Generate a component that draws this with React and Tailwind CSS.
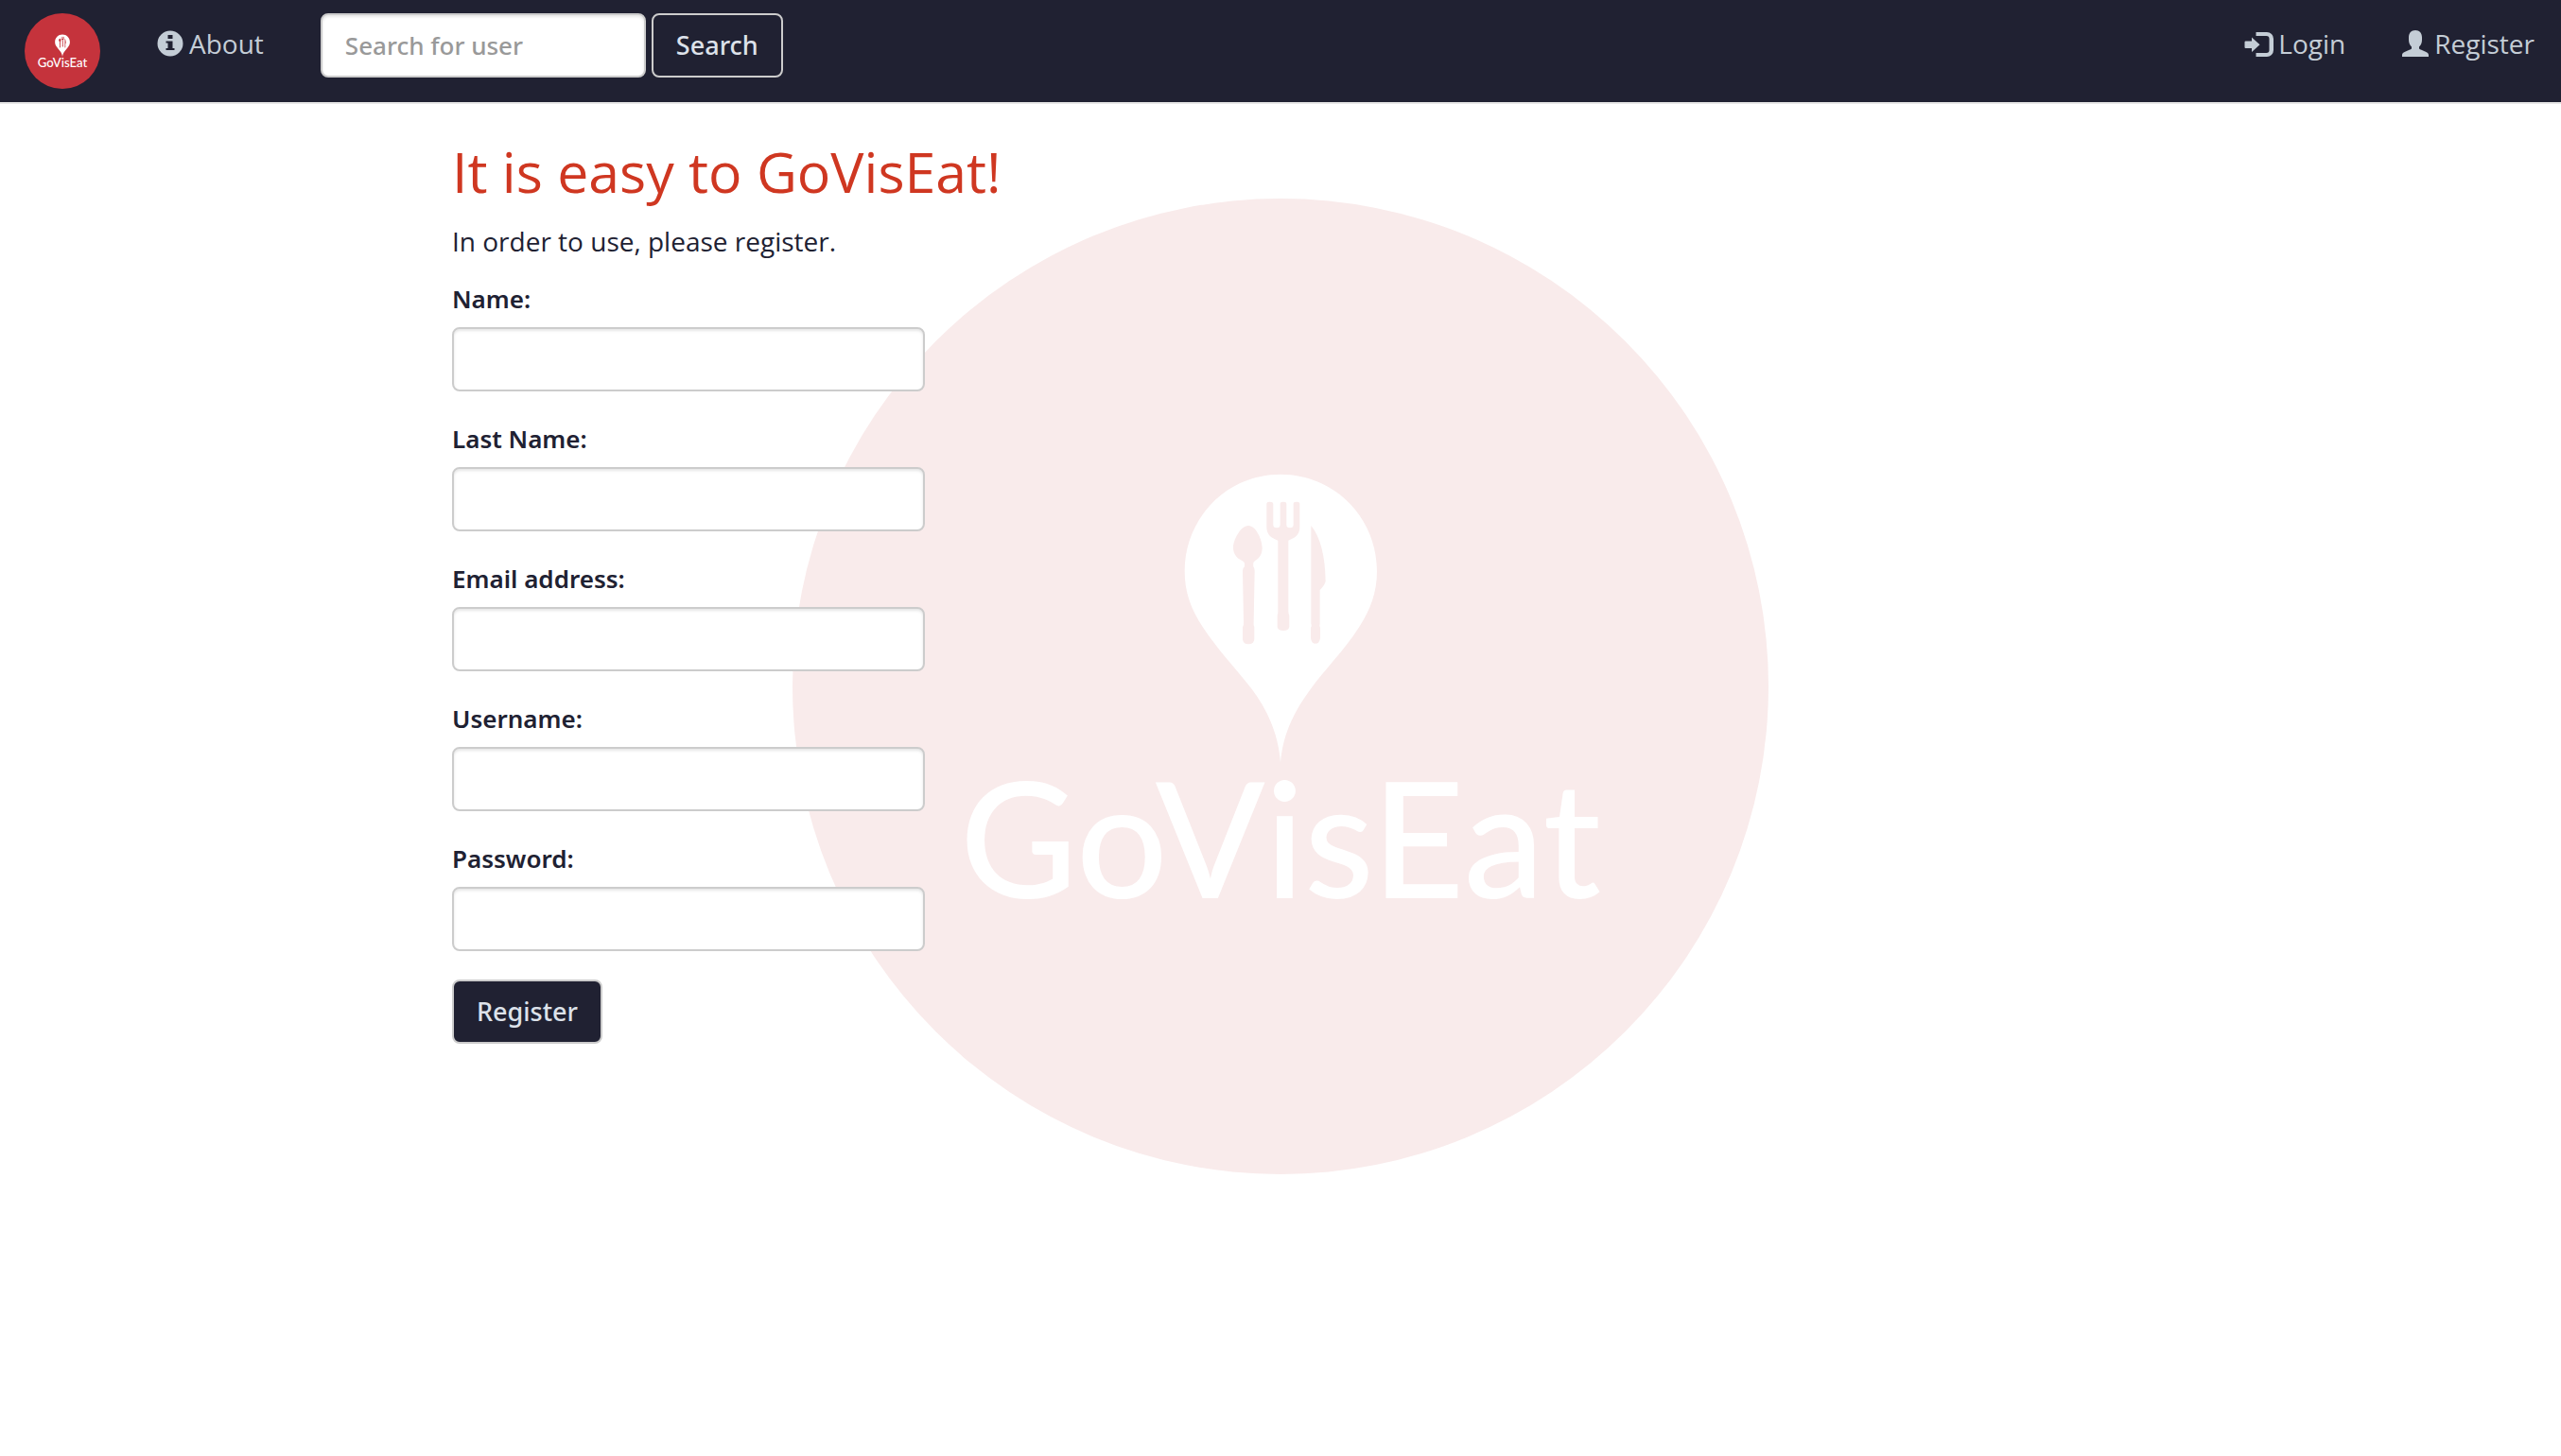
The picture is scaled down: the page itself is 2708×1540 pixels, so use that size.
import React from "react";

const uiFont = "font-['Noto_Sans','Open_Sans',sans-serif]";
const fieldBox =
  "h-[68px] rounded-lg border-2 border-[#cccccc] bg-white px-6 text-[26px] font-medium text-[#202132] shadow-[inset_0_2px_3px_rgba(0,0,0,0.1)] outline-none placeholder:text-[#999999] placeholder:opacity-100 focus:border-[#66afe9]";
const buttonBox =
  "h-[68px] cursor-pointer rounded-lg border-2 border-[#cccccc] bg-[#202132] px-6 text-[27px] font-medium text-[#dde2ea]";

function Logo({ className, disc, label }) {
  return (
    <svg viewBox="0 0 1032 1032" className={className} role="img" aria-label={label}>
      <circle cx="516" cy="516" r="516" fill={disc} />
      <g transform="translate(382 270) scale(0.3333)">
        <path
          fill="#ffffff"
          d="M402 65C572 65 708 202 708 372C708 440 688 492 652 549C600 630 545 680 495 750C445 818 409 890 402 980C395 890 362 815 312 748C260 680 205 625 155 549C118 492 98 440 98 372C98 202 233 65 402 65Z"
        />
        <g fill={disc}>
          <path d="M300 228C325 228 344 274 344 298C344 322 333 332 322 339C314 344 316 350 316 358Q320 363 320 372L317 535Q316 544 319 550V588Q318 604 300 604Q283 604 282 588V550Q286 544 285 535L282 372Q282 363 288 358C288 350 290 344 280 339C266 333 252 320 252 298C252 274 275 228 300 228Z" />
          <path d="M358 158Q358 152 368 152T379 158V225Q379 235 390 235T401 225V158Q401 152 411 152T421 158V225Q421 235 432 235T443 225V158Q443 152 453 152T463 158V232C463 256 450 267 427 275V500Q427 508 430 514V550Q428 561 411 561T392 550V514Q394 508 394 500V275C371 267 358 256 358 232Z" />
          <path d="M499 228C530 265 544 330 545 405C541 418 534 426 527 432V538Q525 545 528 552V584Q526 602 513 602T498 584V552Q502 545 499 538Z" />
        </g>
      </g>
      <text
        x="516"
        y="740"
        textAnchor="middle"
        fill="#ffffff"
        className="font-['Lato',sans-serif] text-[170px] font-medium"
      >
        GoVisEat
      </text>
    </svg>
  );
}

function InfoIcon() {
  return (
    <svg viewBox="0 0 28 28" className="size-7" fill="currentColor" aria-hidden="true">
      <path
        fillRule="evenodd"
        d="M14 0.5a13.5 13.5 0 1 1 0 27a13.5 13.5 0 1 1 0-27ZM11.5 5v4h5V5ZM9.5 11.500v2h2v5.500h-2v2h9v-2h-2v-7.500Z"
      />
    </svg>
  );
}

function LoginIcon() {
  return (
    <svg viewBox="0 0 32 28" className="h-7 w-8" fill="currentColor" aria-hidden="true">
      <path d="M12.500 2H24a7 7 0 0 1 7 7v12a7 7 0 0 1-7 7H12.500V24H23.500a3 3 0 0 0 3-3V9a3 3 0 0 0-3-3H12.500Z" />
      <path d="M1.500 11.500H8V7.500L16.500 15.200L8 23V19H1.500Q0.500 19 0.500 18V12.500Q0.500 11.500 1.500 11.500Z" />
    </svg>
  );
}

function UserIcon() {
  return (
    <svg viewBox="0 0 28 28" className="size-7" fill="currentColor" aria-hidden="true">
      <path d="M14 0C18.500 0 21 3 21 7.500V10C21 13.500 20 15.500 18 17.500V19.500C20 21.500 28 22.500 28 26V28H0V26C0 22.500 8 21.500 10 19.500V17.500C8 15.500 7 13.500 7 10V7.500C7 3 9.500 0 14 0Z" />
    </svg>
  );
}

function NavLink({ href, icon, gap, children }) {
  return (
    <a href={href} className={`flex h-16 items-center text-[28px] text-[#c4cdd6] hover:text-white ${gap}`}>
      {icon}
      {children}
    </a>
  );
}

const fields = [
  { id: "name", label: "Name:", type: "text" },
  { id: "last-name", label: "Last Name:", type: "text" },
  { id: "email", label: "Email address:", type: "email" },
  { id: "username", label: "Username:", type: "text" },
  { id: "password", label: "Password:", type: "password" },
];

export default function App() {
  return (
    <div className="min-h-screen bg-white font-['Open_Sans',sans-serif] text-[#202132]">
      <nav className="flex items-start border-b-2 border-[#e7e7e7] bg-[#202132] py-3.5 pr-7 pl-[26px]">
        <a href="#home" className="mr-[60px] block">
          <Logo className="size-20" disc="#c5333c" label="GoVisEat" />
        </a>
        <NavLink href="#about" icon={<InfoIcon />} gap="gap-1.5">
          About
        </NavLink>
        <form className={`ml-[60px] flex gap-1.5 ${uiFont}`} onSubmit={(e) => e.preventDefault()}>
          <input
            type="text"
            aria-label="Search for user"
            placeholder="Search for user"
            className={`w-[344px] ${fieldBox}`}
          />
          <button type="submit" className={buttonBox}>
            Search
          </button>
        </form>
        <div className="ml-auto flex gap-[60px]">
          <NavLink href="#login" icon={<LoginIcon />} gap="gap-1">
            Login
          </NavLink>
          <NavLink href="#register" icon={<UserIcon />} gap="gap-1.5">
            Register
          </NavLink>
        </div>
      </nav>

      <main className="grid">
        <Logo
          className="col-start-1 row-start-1 mt-[100px] size-[1032px] justify-self-center"
          disc="#f9ebeb"
          label="GoVisEat logo"
        />
        <div className="z-10 col-start-1 row-start-1 mx-auto w-full max-w-[1752px] pt-[38px]">
          <h1 className="text-[59px] leading-[66px] text-[#cf3721]">It is easy to GoVisEat!</h1>
          <p className="mt-5 text-[28px] leading-[42px]">In order to use, please register.</p>
          <form
            className={`mt-[18px] flex w-[500px] flex-col items-start ${uiFont}`}
            onSubmit={(e) => e.preventDefault()}
          >
            {fields.map((f) => (
              <div key={f.id} className="mb-7 w-full">
                <label htmlFor={f.id} className="mb-2 block text-[26px] leading-[44px] font-semibold">
                  {f.label}
                </label>
                <input id={f.id} type={f.type} className={`w-full ${fieldBox}`} />
              </div>
            ))}
            <button type="submit" className={`mt-0.5 ${buttonBox}`}>
              Register
            </button>
          </form>
        </div>
      </main>
    </div>
  );
}
